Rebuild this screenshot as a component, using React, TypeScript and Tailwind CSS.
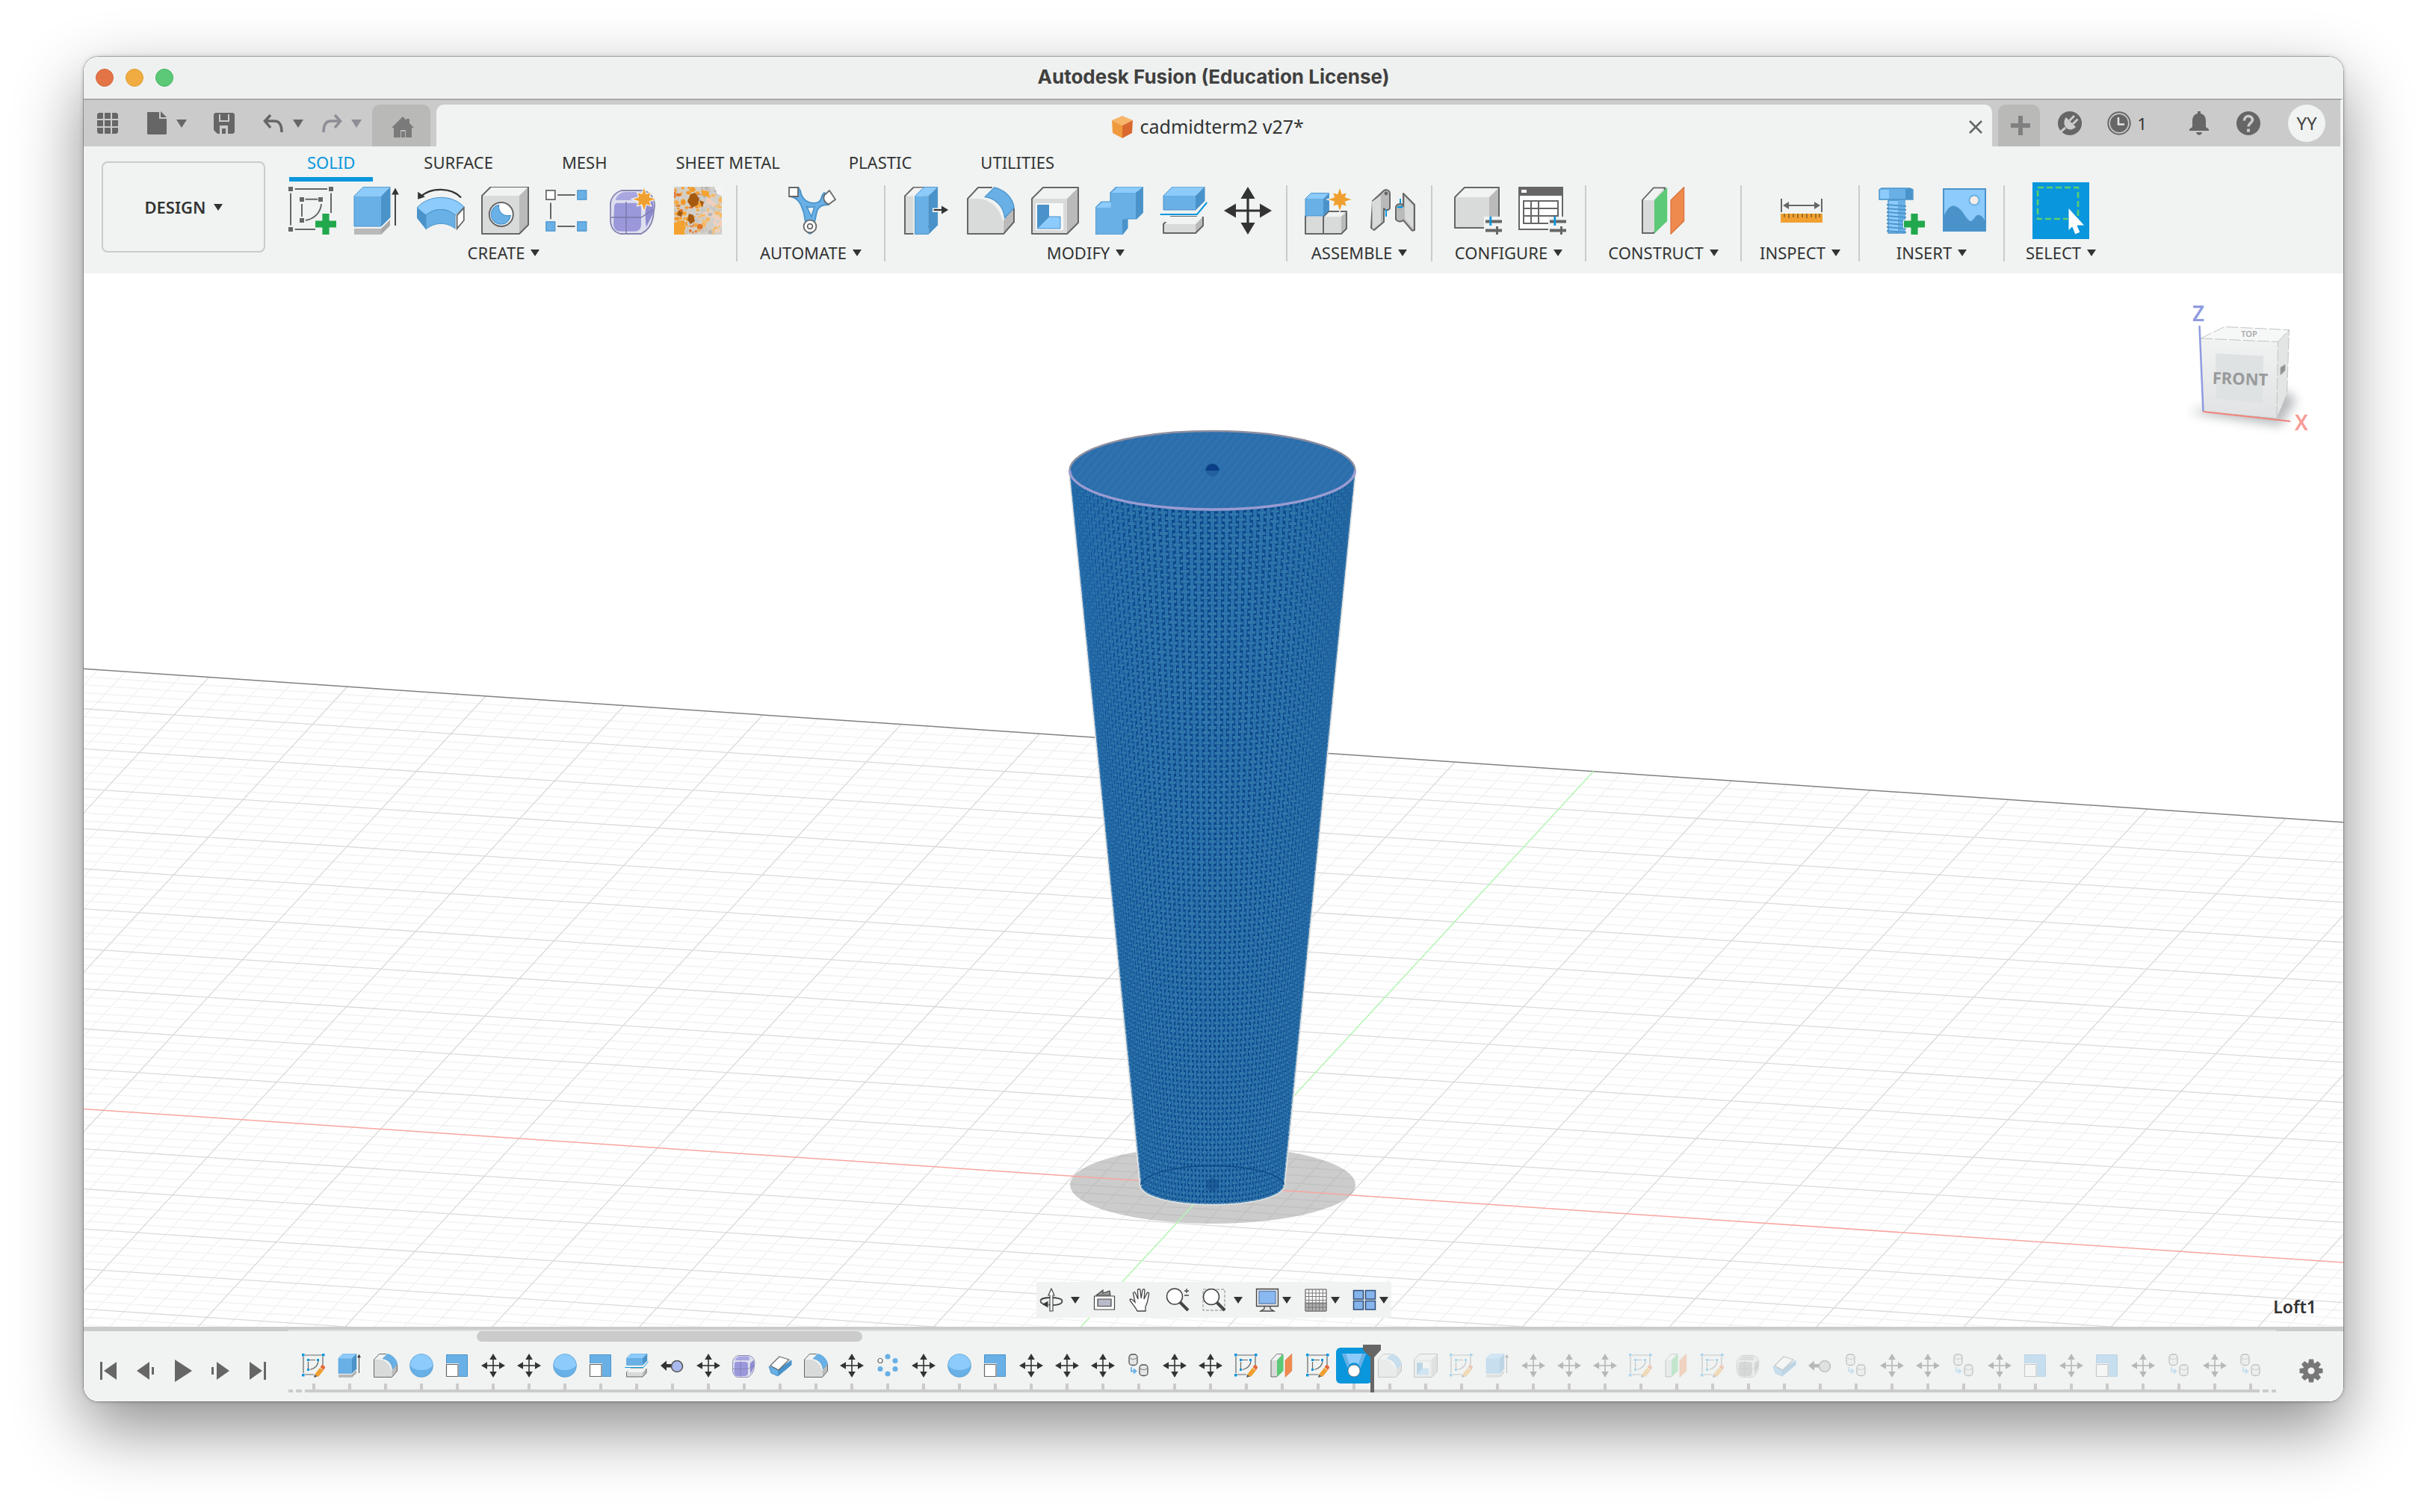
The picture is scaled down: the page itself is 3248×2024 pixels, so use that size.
import type { ReactNode } from "react";

const LIGHT = "#8ccbfb";
const MID = "#68b0e6";
const DARK = "#4a93ca";
const GREY_TOP = "#f1f2f2";
const GREY = "#d9dada";
const GREY_SIDE = "#bababa";
const LINE = "#666666";

/* ---------- icon building blocks, all on a 32 x 32 canvas ---------- */

function Icon({ size = 64, children }: { size?: number; children: ReactNode }) {
  return (
    <svg width={size} height={size} viewBox="0 0 32 32" className="shrink-0" aria-hidden="true">
      {children}
    </svg>
  );
}

type BlockProps = { x: number; y: number; w: number; h: number; d?: number; blue?: boolean };

// simple extruded box: front face w x h, depth d going up and right
function Block({ x, y, w, h, d = 6, blue = false }: BlockProps) {
  const stroke = blue ? DARK : LINE;
  return (
    <g strokeLinejoin="round">
      <path d={`M${x} ${y}l${d} ${-d}h${w}l${-d} ${d}z`} fill={blue ? LIGHT : GREY_TOP} />
      <path d={`M${x} ${y}h${w}v${h}h${-w}z`} fill={blue ? MID : GREY} />
      <path d={`M${x + w} ${y}l${d} ${-d}v${h}l${-d} ${d}z`} fill={blue ? DARK : GREY_SIDE} />
      <path
        d={`M${x} ${y}l${d} ${-d}h${w}v${h}l${-d} ${d}h${-w}z`}
        fill="none"
        stroke={stroke}
        strokeWidth={blue ? 0.5 : 1}
      />
    </g>
  );
}

function Star({ cx, cy, r }: { cx: number; cy: number; r: number }) {
  const pts = Array.from({ length: 16 }, (_, i) => {
    const rad = i % 2 ? r * 0.48 : i % 4 ? r * 0.8 : r;
    const a = (Math.PI * i) / 8;
    return `${cx + rad * Math.sin(a)},${cy - rad * Math.cos(a)}`;
  }).join(" ");
  return <polygon points={pts} fill="#f0a030" stroke="#f0f3f2" strokeWidth="0.6" />;
}

const sketchIcon = (
  <g>
    <path
      d="M4.3 1.5H26M1.5 4.2V25.7M4.3 28.5H18M28.5 4.2V17.5M11.3 8.4H19.6M9 11.5V20M22 11.5C21.6 17 17.5 21.5 11.5 22.5"
      stroke={LINE}
      strokeWidth="1"
      fill="none"
    />
    <path d="M0 0h3v3H0zM27 0h3v3h-3zM0 27h3v3H0zM7.5 7h3v3h-3zM20 7h3v3h-3zM7.5 21h3v3h-3z" fill={LINE} />
    <path d="M22.7 18h4.6v4.7H32v4.6h-4.7V32h-4.6v-4.7H18v-4.6h4.7z" fill="#22a84c" />
  </g>
);

const extrudeIcon = (
  <g>
    <path d="M1 28h18l6-6v4l-6 6H1z" fill="#a9a9a9" />
    <path d="M1 28h18v4H1z" fill="#b9b9b9" />
    <path d="M1 26.8h18l6-6" fill="none" stroke="#f0f3f2" strokeWidth="1.5" />
    <Block x={1} y={6.2} w={18} h={20.3} blue />
    <path d="M28.5 26V4" stroke="#333" strokeWidth="0.9" />
    <path d="M28.5 0.8l2.4 4.4h-4.8z" fill="#333" />
  </g>
);

const revolveIcon = (
  <g>
    <path d="M29.5 7.2C23 .5 10 0 2.5 6.5" fill="none" stroke="#333" strokeWidth="1.1" />
    <path d="M.6 8.4V3.4l4.8 3.4z" fill="#333" />
    <path d="M0 14C8 5 24 5 31.5 13.5L25.5 19C20 14 12 14 6 19z" fill={LIGHT} stroke={DARK} strokeWidth="0.5" />
    <path d="M6 19C12 14 20 14 25.5 19v9C20 23.5 12 23.5 6 28.5z" fill={MID} stroke={DARK} strokeWidth="0.5" />
    <path d="M0 14l6 5v9.5L0 21z" fill={DARK} />
    <path d="M26.8 19.2l4.6-5v8.3l-4.6 5.5z" fill="#fff" stroke={LINE} strokeWidth="0.9" />
  </g>
);

const holeIcon = (
  <g>
    <Block x={0.5} y={6} w={25} h={25.5} />
    <circle cx="13.4" cy="18.5" r="8" fill="#fff" stroke={LINE} strokeWidth="1" />
    <path d="M11.8 12.2A6.5 6.5 0 1 0 19.6 19.2C14.6 20 11.2 17 11.8 12.2z" fill={MID} stroke={DARK} strokeWidth="0.6" />
  </g>
);

const patternIcon = (
  <g>
    <path d="M8 5.5H19.8M3.5 10.8V21.6M8 26.5H19.8" stroke={LINE} strokeWidth="1" />
    <path d="M.4 2.4h6v6.2h-6z" fill="#fff" stroke={LINE} strokeWidth="0.9" />
    <path d="M21.4 2.4h6v6.2h-6zM.4 23.4h6v6.2h-6zM21.4 23.4h6v6.2h-6z" fill={MID} stroke={DARK} strokeWidth="0.6" />
  </g>
);

const formBody = (
  <g>
    <path
      d="M.5 11C1 7 4 3.5 8 2.5h14c5 1 8 5 8 10l-1 8c-1 5-4 9-8 11H7c-4-1-6-4-6.5-8z"
      fill="#dedfee"
      stroke="#8583b0"
      strokeWidth="0.9"
    />
    <path d="M3 13.5c0-2 1-2.6 3-2.6h10c4 0 5 1 5 4v10c0 4-2 5-5 5H7c-3 0-4.5-2-4.5-5z" fill="#9a98da" />
    <path d="M4 8c1.5-3 4-4.5 7-4.5h9c3 .5 4 3 2 5.5H4z" fill="#a9a7e0" />
    <path d="M24 13l4-4c1.5 1 1.6 6 1 9l-4.5 9c-.8-4-.8-10-.5-14z" fill="#8f8dd0" />
    <path d="M1 20.5h20l8-5M11 10v21" stroke="#7a78ab" strokeWidth="0.7" fill="none" />
  </g>
);

const formIcon = (
  <g>
    {formBody}
    <Star cx={23} cy={8.3} r={8.4} />
  </g>
);

// pseudo random cells of the porous lattice thumbnail
const CELLS = Array.from({ length: 150 }, (_, i) => {
  const rnd = (k: number) => {
    const v = Math.sin(i * 12.9898 + k * 78.233) * 43758.5453;
    return v - Math.floor(v);
  };
  const colors = ["#f5a330", "#f0992b", "#e0762a", "#c9c5c0", "#f3cdb9", "#b9b6b2", "#f6b760"];
  const x = rnd(1) * 32;
  const pale = x > 18 ? 3 : 0;
  return { x, y: rnd(2) * 32, rx: 0.8 + rnd(3) * 1.5, ry: 0.8 + rnd(4) * 1.6, fill: colors[Math.floor(rnd(5) * 4) + pale] };
});

const latticeIcon = (
  <g>
    <rect width="32" height="32" fill="#d2cfca" />
    {CELLS.map((c, i) => (
      <ellipse key={i} cx={c.x} cy={c.y} rx={c.rx} ry={c.ry} fill={c.fill} stroke="#dedbd5" strokeWidth="0.3" />
    ))}
    <path d="M11 5l3-1 3 4-1 4-4 2-3-4zM10 18l3 1 1 4-3 2-2-3zM17 9l3 1-1 4zM3 16l3 1-1 3-3-1z" fill="#a55a10" />
    <path d="M0 24l5-1 3 4-2 5H0zM18 2l5 1 1 4-5-1z" fill="#f5a330" />
    <path d="M27 0h5v6l-3-1z" fill="#f4f4f4" />
  </g>
);

const automateIcon = (
  <g>
    <path
      d="M1 6.5C7 7 9 13 10.5 18L11.5 24C11 26 11 30 14.5 31.5C18 30 18 26 17.5 24L19 17C20 12 25 12 27 12L29 8 24 4C21 7 23 9.5 19.5 10.5C14 12 9 9 8 2.5L6.5 0z"
      fill={MID}
      stroke={DARK}
      strokeWidth="0.9"
    />
    <path d="M12.3 13.2c2 .8 3.5.8 5.2 0L15.4 20z" fill="#f0f3f2" stroke={DARK} strokeWidth="0.8" />
    <path d="M.5.5h6v6h-6z" fill="#fff" stroke={LINE} strokeWidth="0.9" />
    <path d="M27.5 2.5l4 6-4.5 3.2c-3-1-4-4-2.8-6.2z" fill="#fff" stroke={LINE} strokeWidth="0.9" />
    <circle cx="14.5" cy="26.5" r="4.2" fill="#fff" stroke={LINE} strokeWidth="0.9" />
    <circle cx="14.5" cy="26.5" r="1.7" fill="#fff" stroke={LINE} strokeWidth="0.9" />
  </g>
);

const pressPullIcon = (
  <g>
    <Block x={1.5} y={6.2} w={11} h={25.3} />
    <path d="M7.2 6.2L13 .2V32H7.2z" fill="#f0f3f2" />
    <Block x={8.3} y={6.2} w={9} h={25.5} blue />
    <path d="M20 14.2h6v-3.4l5.5 4.8-5.5 4.8v-3.4h-6z" fill="#f0f3f2" />
    <path d="M20.8 15.5h6" stroke="#333" strokeWidth="1.1" />
    <path d="M26 12.8l4.6 2.7-4.6 2.7z" fill="#333" />
  </g>
);

const filletIcon = (
  <g strokeLinejoin="round">
    <path d="M.5 8L7.5.5H17L11 7.5z" fill={GREY_TOP} />
    <path d="M.5 8H7C17 8 24 17 24.3 26v5.5H.5z" fill={GREY} />
    <path d="M24.5 22.5L31.5 14.5V23.5L24.5 31.5z" fill={GREY_SIDE} />
    <path d="M17 .5H7.5L.5 8v23.5h24l7-8V14.5" fill="none" stroke={LINE} strokeWidth="1" />
    <path d="M12 6.8L18.5.4C26 2 31 8.5 31.6 14L25.3 21C24.5 13 19 7.5 12 6.8z" fill={MID} stroke={DARK} strokeWidth="0.6" />
  </g>
);

const shellIcon = (
  <g>
    <Block x={0.5} y={8} w={23.5} h={23.5} d={7.5} />
    <path d="M3 11h18.5v18H3z" fill="#f6f7f7" />
    <path d="M4 12h8v8l-8 8z" fill={DARK} />
    <path d="M12 20h7.5v8H4z" fill={LIGHT} stroke={DARK} strokeWidth="0.5" />
  </g>
);

const combineIcon = (
  <g>
    <path d="M0 14l4-4h6V4l4-4h18v17l-4.5 4.5H21.5v6L18 32H0z" fill={MID} stroke={DARK} strokeWidth="0.6" />
    <path d="M10.5 4L14.5.4H31.6L27 4z" fill={LIGHT} />
    <path d="M.4 14l4-3.6h6V14z" fill={LIGHT} />
    <path d="M27 4L31.7.4V17L27 21.5zM18 21.7h3.5v6L18 31.8z" fill={DARK} />
  </g>
);

const splitIcon = (
  <g>
    <Block x={2.5} y={25} w={21.5} h={6} d={5} />
    <path d="M0 20h32v-8l-7 9H0z" fill="#f0f3f2" />
    <path d="M2.5 20.3h22L30 14v5l-6 4.5H2.5z" fill="#f0f3f2" />
    <Block x={2.5} y={6} w={21.5} h={9.5} blue />
    <path d="M.3 18.5H25L31.6 10.5" fill="none" stroke="#0a96dc" strokeWidth="1" />
  </g>
);

const moveIcon = (
  <g fill="#333">
    <path d="M15.2 5h1.6v22h-1.6z" />
    <path d="M5 15.2h22v1.6H5z" />
    <path d="M16 0l4.8 8h-9.6zM16 32l4.8-8h-9.6zM0 16l8-4.8v9.6zM32 16l-8-4.8v9.6z" />
  </g>
);

const componentIcon = (
  <g>
    <Block x={0.5} y={20} w={12} h={11.5} d={3.5} />
    <Block x={12.5} y={20} w={12} h={11.5} d={3.5} />
    <Block x={0.5} y={8} w={12} h={11.5} d={3.7} blue />
    <Star cx={23.5} cy={8.5} r={8.5} />
  </g>
);

const jointIcon = (
  <g strokeLinejoin="round">
    <path d="M2.5 9.5L9 3.5c2-2.5 5-1.5 5 1.5v9.5c-1 1.5-3 1.5-4 0v9L3.5 29l-2-1.5z" fill={GREY_SIDE} stroke={LINE} />
    <path d="M2 10l6-4v18l-5.5 4.5z" fill={GREY} />
    <circle cx="11.5" cy="4.5" r="1.2" fill={LINE} />
    <path d="M11.5 15v5M21 8v5" stroke="#0a96dc" strokeWidth="1" />
    <path d="M23 4.5L30.5 12v17l-1.5.4-6-7c-1.5 1.5-4 1-5-.5V14c0-2.5 4-3.5 5-1z" fill={GREY_SIDE} stroke={LINE} />
    <path d="M24 6.5l5.5 6V28L24 21.5z" fill={GREY} />
    <path d="M18.5 13.5c1.5-1 3.5-1 4.5 0-1 1-3.5 1-4.5 0z" fill="#0a96dc" />
  </g>
);

const sliders = (
  <g>
    <path d="M20 20h12v12H20z" fill="#f0f3f2" />
    <path d="M21 22.2h11v2H21zM21 28.2h11v2H21z" fill={LINE} />
    <path d="M23.7 20h1.4v6h-1.4z" fill="#0a96dc" />
    <path d="M28 26.5h1.5V32H28z" fill={LINE} />
  </g>
);

const configureIcon = (
  <g>
    <Block x={0.5} y={7} w={23} h={20.5} d={6.5} />
    {sliders}
  </g>
);

const tableIcon = (
  <g>
    <path d="M.5.5h29v28H.5z" fill="#fff" stroke={LINE} />
    <path d="M0 0h30v6H0z" fill={LINE} />
    <path d="M2 2h3.5v2H2z" fill="#fff" />
    <path d="M3.5 9.5h23v15h-23zM3.5 14.5h23M3.5 19.5h23M8.5 9.5v15M13.5 9.5v15" fill="none" stroke={LINE} />
    {sliders}
  </g>
);

const planesIcon = (
  <g>
    <path d="M1 9L8.5 .8H16V23L8.5 31H1z" fill={GREY} stroke={LINE} />
    <path d="M1.5 9L8.7 1.2H15L8.5 9z" fill={GREY_TOP} />
    <path d="M9 9L17.6.3V23L9 31.3z" fill="#5bc976" />
    <path d="M20 9L28.8.3V23L20 31.6z" fill="#ee8a4e" stroke="#d9703a" strokeWidth="0.6" />
  </g>
);

const rulerIcon = (
  <g>
    <path d="M2.5 8v9M29.5 8v9M5 12.5h22" stroke={LINE} />
    <path d="M3.5 12.5l4-2.5v5zM28.5 12.5l-4-2.5v5z" fill={LINE} />
    <path d="M2 18h28v6H2z" fill="#f0a030" />
    <path
      d="M4.5 18v2.5M7.5 18v3M10.5 18v2.5M13.5 18v3M16.5 18v2.5M19.5 18v3M22.5 18v2.5M25.5 18v3M28 18v2.5"
      stroke="#7d5a20"
      strokeWidth="0.7"
    />
  </g>
);

const boltIcon = (
  <g>
    <path d="M1.5 2L3 1h19l2 1v6.5H1.5z" fill={MID} stroke={DARK} strokeWidth="0.7" />
    <path d="M2 2h6v6H2z" fill={LIGHT} />
    <path d="M19 1.5h4.5v7H19z" fill={DARK} />
    <path d="M7.5 9h11v22h-11z" fill={LIGHT} stroke={DARK} strokeWidth="0.7" />
    <path d="M14 9h4.5v22H14z" fill={MID} />
    <path
      d="M6.5 12l13 1M6.5 14.5l13 1M6.5 17l13 1M6.5 19.5l13 1M6.5 22l13 1M6.5 24.5l13 1M6.5 27l13 1M6.5 29.5l13 1"
      stroke={DARK}
      strokeWidth="0.9"
    />
    <path
      d="M22.7 18h4.6v4.7H32v4.6h-4.7V32h-4.6v-4.7H18v-4.6h4.7z"
      fill="#22a84c"
      stroke="#f0f3f2"
      strokeWidth="1"
      paintOrder="stroke"
    />
  </g>
);

const pictureIcon = (
  <g>
    <path d="M1.5 1.5h28v28h-28z" fill={LIGHT} stroke={DARK} />
    <path d="M1.5 20C5 12 8 12 10.5 13.5C15 16 17 23 20 23C22 22 23 18 25.5 19C28 20 29 22 29.5 24v5.5h-28z" fill={DARK} />
    <circle cx="22" cy="9" r="3.3" fill="#f7ece6" stroke={MID} />
  </g>
);

/* ---------- timeline-only icons ---------- */

const sketchEditIcon = (
  <g>
    <path
      d="M4 2H28M2 4V26M4 28H16M28 4V16M10 8.5h8M8.5 11v9M22 9.5C22 15 18 20 11 21.5"
      stroke={LINE}
      strokeWidth="1.2"
      fill="none"
    />
    <path d="M0 0h3.5v3.5H0zM27 0h3.5v3.5H27zM0 27h3.5v3.5H0zM7 7h3v3H7zM20 7h3v3h-3zM7 20h3v3H7z" fill="#0a96dc" />
    <path d="M17 28L24 19l5 3.5L22 31z" fill="#f0a030" />
    <path d="M24.5 18l2-2.5c1.5-1 5 1.5 4.5 3.5l-2 3z" fill="#e6693a" />
    <path d="M17 28l-1 4 5-1.5z" fill="#555" />
  </g>
);

const sphereIcon = (
  <g>
    <circle cx="16" cy="16" r="15.5" fill={MID} stroke={DARK} strokeWidth="0.6" />
    <path d="M1 16a15 15 0 0 1 30 0c-6 8-24 8-30 0z" fill={LIGHT} />
  </g>
);

const scaleIcon = (
  <g>
    <path d="M1.5 1.5h28v29h-28z" fill={MID} stroke={DARK} />
    <path d="M0 13h18v19H0z" fill="#f0f3f2" />
    <path d="M1.5 14.5h15.5v16H1.5z" fill="#fff" stroke={LINE} strokeWidth="1.2" />
  </g>
);

const captureIcon = (
  <g>
    <path d="M0 16l8-6.5v4.5h6v4.5H8V23z" fill="#333" />
    <circle cx="22" cy="17" r="7.5" fill="#a9b8ee" stroke="#555" strokeWidth="1.6" />
  </g>
);

const thickenIcon = (
  <g strokeLinejoin="round">
    <path d="M1 17l3 9 9 4L31 15V9L14 22z" fill={MID} stroke={DARK} />
    <path d="M13 21L31 9v6L13 30z" fill={DARK} />
    <path d="M3 16L15 4l13 4L14 22z" fill="#fff" stroke={LINE} strokeWidth="1.2" />
  </g>
);

const circularIcon = (
  <g fill={MID}>
    <circle cx="16" cy="4" r="3.5" />
    <circle cx="26" cy="9.5" r="3.5" />
    <circle cx="26" cy="20.5" r="3.5" />
    <circle cx="16" cy="27" r="3.5" />
    <circle cx="6" cy="20.5" r="3.5" />
    <circle cx="6" cy="9.5" r="3" fill="#fff" stroke={LINE} strokeWidth="1.2" />
  </g>
);

const copyIcon = (
  <g stroke="#555" strokeWidth="1.3" fill="#e4e5e5">
    <rect x="3" y="1" width="11" height="14.5" rx="4" />
    <rect x="17" y="15" width="11" height="14.5" rx="4" />
    <path d="M4 6c3 2 6 2 9 0M18 20c3 2 6 2 9 0" fill="none" strokeWidth="0.8" />
    <path d="M6 18v5.5h5M9 20.5l3.5 3-3.5 3" fill="none" stroke={MID} strokeWidth="1.8" />
  </g>
);

const loftIcon = (
  <g>
    <path d="M0 0h32L24.5 19C23 10 9 10 7.5 19z" fill={LIGHT} />
    <path d="M0 0h5l5 14-2.5 5zM32 0h-5l-5 14 2.5 5z" fill={MID} />
    <circle cx="16" cy="23" r="8" fill="#fff" stroke={LINE} strokeWidth="0.8" />
  </g>
);

const TIMELINE_ICONS: Record<string, ReactNode> = {
  Sketch: sketchEditIcon,
  Extrude: extrudeIcon,
  Fillet: filletIcon,
  Sphere: sphereIcon,
  Scale: scaleIcon,
  Move: moveIcon,
  Split: splitIcon,
  Capture: captureIcon,
  Form: formBody,
  Thicken: thickenIcon,
  Circular: circularIcon,
  Copy: copyIcon,
  Plane: planesIcon,
  Loft: loftIcon,
  Shell: shellIcon,
};

const TIMELINE = (
  "Sketch Extrude Fillet Sphere Scale Move Move Sphere Scale Split Capture Move Form Thicken Fillet Move Circular Move " +
  "Sphere Scale Move Move Move Copy Move Move Sketch Plane Sketch Loft Fillet Shell Sketch Extrude Move Move Move " +
  "Sketch Plane Sketch Form Thicken Capture Copy Move Move Copy Move Scale Move Scale Move Copy Move Copy"
).split(" ");
const CURRENT = 29;

function timelineButtonClass(name: string, i: number) {
  if (i === CURRENT) return "flex size-12 items-center justify-center rounded-md bg-[#0a96dc]";
  if (i < CURRENT) return "flex size-12 items-center justify-center";
  // rolled back features are dimmed, some of them lose their colour too
  return name === "Form" || name === "Capture"
    ? "flex size-12 items-center justify-center opacity-30 grayscale"
    : "flex size-12 items-center justify-center opacity-30";
}

/* ---------- title bar and document tabs ---------- */

function Caret({ className = "text-[#333]" }: { className?: string }) {
  return (
    <svg width="12" height="9" viewBox="0 0 12 9" className={className} aria-hidden="true">
      <path d="M0 0h12L6 9z" fill="currentColor" />
    </svg>
  );
}

function WideCaret() {
  return (
    <svg width="14" height="11" viewBox="0 0 14 11" fill="currentColor" aria-hidden="true">
      <path d="M0 0h14L7 11z" />
    </svg>
  );
}

function TitleBar() {
  return (
    <header className="grid h-14 shrink-0 grid-cols-[1fr_auto_1fr] items-center bg-[#eff1f0]">
      <div className="flex gap-4 pl-4">
        <button aria-label="Close" className="size-6 rounded-full border border-[#d5673d] bg-[#e27446]" />
        <button aria-label="Minimise" className="size-6 rounded-full border border-[#e19d35] bg-[#f0ab41]" />
        <button aria-label="Zoom" className="size-6 rounded-full border border-[#43b561] bg-[#5bc976]" />
      </div>
      <h1 className="pb-0.5 font-['Inter',sans-serif] text-[26px] leading-8 font-bold text-[#404040]">
        Autodesk Fusion (Education License)
      </h1>
    </header>
  );
}

function TabStrip() {
  return (
    <div className="flex h-16 shrink-0 items-center border-t-2 border-r-4 border-t-[#a8a8a8] border-r-[#f0f3f2] bg-[#cbcbcb] text-[#666]">
      <button aria-label="Data panel" className="ml-[18px]">
        <svg width="28" height="28" viewBox="0 0 28 28" fill="currentColor">
          <path d="M2 0h6v8H0V2zM10 0h8v8h-8zM20 0h6l2 2v6h-8zM0 10h8v8H0zM10 10h8v8h-8zM20 10h8v8h-8zM0 20h8v8H2l-2-2zM10 20h8v8h-8zM20 20h8v6l-2 2h-6z" />
        </svg>
      </button>
      <button aria-label="File" className="ml-[38px] flex items-center gap-3">
        <svg width="28" height="32" viewBox="0 0 28 32" fill="currentColor">
          <path d="M1 1h16v9h10v20l-1 1H2l-1-1zM19 0l8 8h-8z" />
        </svg>
        <WideCaret />
      </button>
      <button aria-label="Save" className="ml-9">
        <svg width="28" height="28" viewBox="0 0 28 28" fill="currentColor" fillRule="evenodd">
          <path d="M2 0h24l2 2v24l-2 2H5l-5-5V2zM7 2v10h14V2h-2v8H9V2zM8 17v11h3v-7h5v7h3V17z" />
        </svg>
      </button>
      <button aria-label="Undo" className="ml-[38px] flex items-center gap-3">
        <svg width="28" height="26" viewBox="0 0 28 26" fill="none" stroke="currentColor" strokeWidth="3.5">
          <path d="M10 2L2.5 10l7.5 9M3 10h12c6 0 10 4 10 15" />
        </svg>
        <WideCaret />
      </button>
      <button aria-label="Redo" className="ml-6 flex items-center gap-3 text-[#8d8d96]">
        <svg width="28" height="26" viewBox="0 0 28 26" fill="none" stroke="currentColor" strokeWidth="3.5">
          <path d="M18 2l7.5 8-7.5 9M25 10H13C7 10 3 14 3 25" />
        </svg>
        <WideCaret />
      </button>
      <button aria-label="Home" className="ml-3.5 flex h-14 w-[78px] items-center justify-center self-end rounded-t-[10px] bg-[#b9b9b7] pt-1 pl-1 text-[#7a7a7a]">
        <svg width="32" height="28" viewBox="0 0 32 28" fill="currentColor" fillRule="evenodd">
          <path d="M16 0l5 5V3h4v6l6 6h-3v13h-8V18h-7v10H4V15H1zM14 20h5v8h-5z" />
        </svg>
      </button>
      <div className="ml-2 flex h-14 flex-1 items-center self-end rounded-t-[10px] bg-[#f0f3f2] pt-1 pr-3">
        <div className="flex flex-1 items-center justify-center gap-2 pl-3 font-['Noto_Sans',sans-serif] text-[25px] text-[#333]">
          <svg width="32" height="32" viewBox="0 0 32 32" aria-hidden="true">
            <path d="M16 1l14 6-14 7L2 7z" fill="#f7b56a" />
            <path d="M2 7l14 7v17L3 24z" fill="#f09a3e" />
            <path d="M30 7l-14 7v17l13-7z" fill="#d9692f" />
          </svg>
          cadmidterm2 v27*
        </div>
        <button aria-label="Close tab">
          <svg width="20" height="20" viewBox="0 0 20 20" stroke="currentColor" strokeWidth="2.5">
            <path d="M2 2l16 16M18 2L2 18" />
          </svg>
        </button>
      </div>
      <button aria-label="New tab" className="ml-2 flex h-14 w-14 items-center justify-center self-end rounded-t-[10px] bg-[#b9b9b7] pl-1 text-[#808080]">
        <svg width="26" height="26" viewBox="0 0 26 26" fill="currentColor">
          <path d="M10 0h6v10h10v6H16v10h-6V16H0v-6h10z" />
        </svg>
      </button>
      <button aria-label="Extensions" className="ml-6">
        <svg width="32" height="32" viewBox="0 0 32 32">
          <circle cx="16" cy="16" r="16" fill="#666" />
          <path d="M11 8l13 13c-4 4-9 4.500-12.500 1.500S7 12 11 8z" fill="#cbcbcb" />
          <path d="M15.500 12.500L22 6M20 17l6.500-6.500M10 22l-7 6" stroke="#cbcbcb" strokeWidth="3" />
        </svg>
      </button>
      <button aria-label="Job status" className="ml-[34px] flex items-center gap-2 font-['Noto_Sans',sans-serif] text-[22px] text-[#333]">
        <svg width="32" height="32" viewBox="0 0 32 32">
          <circle cx="16" cy="16" r="14.7" fill="#cbcbcb" stroke="#666" strokeWidth="2" />
          <circle cx="16" cy="16" r="12" fill="#666" />
          <path d="M15 8v9.5h8" fill="none" stroke="#e4e4e4" strokeWidth="2.5" />
        </svg>
        1
      </button>
      <button aria-label="Notifications" className="ml-[54px]">
        <svg width="32" height="32" viewBox="0 0 32 32" fill="currentColor">
          <path d="M14 0h4v3c5 1 7 5 7 10v8l4 3v2H3v-2l4-3v-8c0-5 2-9 7-10zM12 28h8c-1 5-7 5-8 0z" />
        </svg>
      </button>
      <button aria-label="Help" className="ml-[34px]">
        <svg width="32" height="32" viewBox="0 0 32 32">
          <circle cx="16" cy="16" r="16" fill="#666" />
          <path d="M10.5 12.5c0-8 11-7.5 11-1 0 4-5.5 4.5-5.5 9" fill="none" stroke="#cbcbcb" strokeWidth="3.6" />
          <path d="M14 23.5h4v4h-4z" fill="#cbcbcb" />
        </svg>
      </button>
      <button className="mr-5 ml-[37px] size-[50px] rounded-full bg-[#f0f3f2] font-['Noto_Sans',sans-serif] text-2xl text-[#444]">
        YY
      </button>
    </div>
  );
}

/* ---------- ribbon ---------- */

const MODES = ["SOLID", "SURFACE", "MESH", "SHEET METAL", "PLASTIC", "UTILITIES"];

type Tool = { name: string; icon: ReactNode };
type Group = { label: string; width: string; tools: Tool[] };

const GROUPS: Group[] = [
  {
    label: "CREATE",
    width: "w-[618px] pr-1",
    tools: [
      { name: "Create sketch", icon: sketchIcon },
      { name: "Extrude", icon: extrudeIcon },
      { name: "Revolve", icon: revolveIcon },
      { name: "Hole", icon: holeIcon },
      { name: "Rectangular pattern", icon: patternIcon },
      { name: "Create form", icon: formIcon },
      { name: "Volumetric lattice", icon: latticeIcon },
    ],
  },
  { label: "AUTOMATE", width: "w-[196px]", tools: [{ name: "Automated modeling", icon: automateIcon }] },
  {
    label: "MODIFY",
    width: "w-[536px]",
    tools: [
      { name: "Press pull", icon: pressPullIcon },
      { name: "Fillet", icon: filletIcon },
      { name: "Shell", icon: shellIcon },
      { name: "Combine", icon: combineIcon },
      { name: "Split body", icon: splitIcon },
      { name: "Move", icon: moveIcon },
    ],
  },
  {
    label: "ASSEMBLE",
    width: "w-[192px]",
    tools: [
      { name: "New component", icon: componentIcon },
      { name: "Joint", icon: jointIcon },
    ],
  },
  {
    label: "CONFIGURE",
    width: "w-[204px]",
    tools: [
      { name: "Configure model", icon: configureIcon },
      { name: "Configuration table", icon: tableIcon },
    ],
  },
  { label: "CONSTRUCT", width: "w-[206px]", tools: [{ name: "Offset plane", icon: planesIcon }] },
  { label: "INSPECT", width: "w-[156px]", tools: [{ name: "Measure", icon: rulerIcon }] },
  {
    label: "INSERT",
    width: "w-[192px]",
    tools: [
      { name: "Insert fastener", icon: boltIcon },
      { name: "Canvas", icon: pictureIcon },
    ],
  },
];

function GroupLabel({ children }: { children: string }) {
  return (
    <button className="flex h-8 items-center justify-center gap-2 pt-1 leading-6">
      {children}
      <Caret />
    </button>
  );
}

function Ribbon() {
  return (
    <section className="flex h-[170px] shrink-0 gap-3 bg-[#f0f3f2] pl-6 font-['Noto_Sans',sans-serif] text-[22px] text-[#333]">
      <button className="mt-5 flex h-[122px] w-[219px] items-center justify-center gap-2.5 rounded-lg border-2 border-[#cbcbcb] font-semibold">
        DESIGN
        <Caret />
      </button>
      <div className="flex flex-col">
        <nav className="flex gap-11 pl-5">
          {MODES.map((mode) => (
            <button
              key={mode}
              className={
                mode === "SOLID"
                  ? "h-[47px] border-b-6 border-[#0a96dc] px-6 pt-0.5 text-[#0a96dc]"
                  : "h-[47px] border-b-6 border-transparent px-6 pt-0.5"
              }
            >
              {mode}
            </button>
          ))}
        </nav>
        <div className="flex pt-px">
          {GROUPS.map((group) => (
            <div key={group.label} className="flex">
              <div className={`flex flex-col ${group.width}`}>
                <div className="flex h-[76px] items-center justify-center gap-[22px] pl-1">
                  {group.tools.map((tool) => (
                    <button key={tool.name} aria-label={tool.name}>
                      <Icon>{tool.icon}</Icon>
                    </button>
                  ))}
                </div>
                <GroupLabel>{group.label}</GroupLabel>
              </div>
              <span className="mt-1 h-[102px] w-0.5 bg-[#cbcbcb]" />
            </div>
          ))}
          <div className="flex w-[150px] flex-col items-center">
            <button aria-label="Select" className="bg-[#0a96dc]">
              <svg width="76" height="76" viewBox="0 0 76 76">
                <path d="M7 7h54v42H7z" fill="none" stroke="#5bd06e" strokeWidth="2.5" strokeDasharray="8 4" />
                <path d="M48 34l22 24h-10l4 9-7 3-4-10-5 5z" fill="#fff" stroke="#0a96dc" strokeWidth="1" />
              </svg>
            </button>
            <GroupLabel>SELECT</GroupLabel>
          </div>
        </div>
      </div>
    </section>
  );
}

/* ---------- 3D canvas ---------- */

const ORIGIN = { x: 1509, y: 1221 };
const U = { x: 185.3, y: 12.6 };
const V = { x: 46.5, y: -50.4 };

const at = (u: number, v: number) =>
  `${(ORIGIN.x + U.x * u + V.x * v).toFixed(1)} ${(ORIGIN.y + U.y * u + V.y * v).toFixed(1)}`;

function gridPath(major: boolean) {
  let d = "";
  for (let i = -75; i <= 70; i++) {
    if ((i % 5 === 0) !== major || i === 0) continue;
    d += `M${at(i / 5, 11)}L${at(i / 5, -12)}`;
  }
  for (let j = -60; j < 55; j++) {
    if ((j % 5 === 0) !== major || j === 0) continue;
    d += `M${at(-15, j / 5)}L${at(15, j / 5)}`;
  }
  return d;
}

const GRID_MINOR = gridPath(false);
const GRID_MAJOR = gridPath(true);

// woven texture wrapped round the tapered body
const CONE = { cx: 1510.5, top: 264, bottom: 1220, r0: 191, r1: 96 };

function weave() {
  let across = "";
  let down = "";
  const step = 0.0508;
  for (let row = 0; row < 142; row++) {
    const t = row / 134;
    for (let col = -30; col <= 30; col++) {
      const a = col * step;
      const r = CONE.r0 + (CONE.r1 - CONE.r0) * Math.min(t, 1);
      const x = CONE.cx + r * Math.sin(a);
      const y = CONE.top + (CONE.bottom - CONE.top) * t + r * 0.275 * Math.cos(a);
      const w = r * step * Math.cos(a);
      if ((row + col) % 2 === 0) {
        across += `M${(x - w * 0.62).toFixed(1)} ${(y - 1.9).toFixed(1)}h${(w * 1.24).toFixed(1)}v3.8h${(-w * 1.24).toFixed(1)}z`;
      } else {
        down += `M${(x - w * 0.27).toFixed(1)} ${(y - 5).toFixed(1)}h${(w * 0.54).toFixed(1)}v10h${(-w * 0.54).toFixed(1)}z`;
      }
    }
  }
  return { across, down };
}

const WEAVE = weave();
const BODY = "M1319.5 268L1414.5 1222C1419 1236 1458 1246 1510.5 1246C1563 1246 1602 1236 1606.5 1222L1701.5 268z";

function Scene() {
  return (
    <svg
      viewBox="0 0 3024 1410"
      preserveAspectRatio="xMidYMid slice"
      className="h-full w-full"
      role="img"
      aria-label="Tapered woven body on the ground grid"
    >
      <defs>
        <clipPath id="body">
          <path d={BODY} />
        </clipPath>
        <linearGradient id="shade">
          <stop offset="0" stopColor="#1f68ac" stopOpacity="0.5" />
          <stop offset="0.25" stopColor="#1f68a8" stopOpacity="0.1" />
          <stop offset="0.5" stopColor="#1f68a8" stopOpacity="0" />
          <stop offset="0.75" stopColor="#1f68a0" stopOpacity="0.1" />
          <stop offset="1" stopColor="#1d609c" stopOpacity="0.5" />
        </linearGradient>
        <pattern id="brushed" width="8" height="8" patternUnits="userSpaceOnUse" patternTransform="rotate(40)">
          <rect width="8" height="8" fill="#2b6eac" />
          <rect width="3" height="8" fill="#3172af" />
        </pattern>
      </defs>
      <path d={GRID_MINOR} stroke="#f1f1f1" strokeWidth="1.3" />
      <path d={GRID_MAJOR} stroke="#dadada" strokeWidth="1.3" />
      <path d={`M${at(-15, 11)}L${at(15, 11)}`} stroke="#808080" strokeWidth="1.5" />
      <ellipse cx="1511" cy="1220" rx="191" ry="52" fill="#000" opacity="0.2" />
      <path d={`M${at(-15, 0)}L${at(15, 0)}`} stroke="#f7a5a0" strokeWidth="1.5" />
      <path d={`M${at(0, 11)}L${at(0, -12)}`} stroke="#b4f5b4" strokeWidth="1.5" />

      <path d={BODY} fill="#0a4486" stroke="#e4e4e4" strokeWidth="3" />
      <g clipPath="url(#body)">
        <path d={WEAVE.down} fill="#2b72ae" />
        <path d={WEAVE.across} fill="#3078aa" />
        <path d={BODY} fill="url(#shade)" />
        <path d="M1414 1220C1430 1186 1591 1186 1607 1220" fill="none" stroke="#0d4886" strokeWidth="1.5" />
        <circle cx="1510.5" cy="1220" r="9" fill="#0f4786" opacity="0.5" />
      </g>
      <ellipse cx="1510.5" cy="263.5" rx="191" ry="52.5" fill="url(#brushed)" />
      <path d="M1319.5 263.5A191 52.5 0 0 1 1701.5 263.5" fill="none" stroke="#8f8fa0" strokeWidth="2.5" />
      <path d="M1319.5 263.5A191 52.5 0 0 0 1701.5 263.5" fill="none" stroke="#9a9cd2" strokeWidth="3.5" />
      <circle cx="1510.5" cy="263" r="9" fill="#23609e" />
      <path d="M1501.5 264a9 9 0 0 1 18 0z" fill="#0a3f86" />
    </svg>
  );
}

function ViewCube() {
  return (
    <svg
      width="200"
      height="200"
      viewBox="2910 395 200 200"
      className="absolute top-[29px] right-[26px] font-['Noto_Sans',sans-serif]"
      role="img"
      aria-label="View cube"
    >
      <defs>
        <linearGradient id="face" x1="0" y1="0" x2="0" y2="1">
          <stop offset="0" stopColor="#f1f3f3" />
          <stop offset="1" stopColor="#e0e2e3" />
        </linearGradient>
        <filter id="soft" x="-20%" y="-50%" width="140%" height="200%">
          <feGaussianBlur stdDeviation="7" />
        </filter>
      </defs>
      <path d="M2930 552L3052 570L3074 534L3050 520z" fill="#8a8f92" opacity="0.6" filter="url(#soft)" />
      <path d="M2945 453L2977 437.5L3063.5 441.5L3048.5 457.5z" fill="#f6f7f7" />
      <path d="M3048.5 457.5L3063.5 441.5L3060.5 528L3047 560z" fill="#e3e5e5" />
      <path d="M2945 453L3048.5 457.5L3047 560L2949 551z" fill="url(#face)" />
      <path d="M2965 473L3029 476.5L3028 540L2966 534z" fill="#dfe2e3" />
      <path
        d="M2945 453L2977 437.5L3063.5 441.5L3060.5 528L3047 560L2949 551M2945 453L3048.5 457.5L3047 560M3048.5 457.5L3063.5 441.5"
        fill="none"
        stroke="#c2c4c4"
        strokeDasharray="16 3"
      />
      <path d="M3052 492l6-4v8l-6 6zM3053 500l5-5" fill="#8f9191" stroke="#a3a5a5" />
      <text x="2998" y="515" textAnchor="middle" fontSize="22" fontWeight="700" fill="#989a9b" transform="rotate(2 2998 507)">
        FRONT
      </text>
      <text x="3010" y="451" textAnchor="middle" fontSize="11" fontWeight="600" fill="#a9abab">
        TOP
      </text>
      <path d="M2943.5 436L2948.5 551" stroke="#8f9be0" strokeWidth="2.5" />
      <path d="M2948.5 551L3065 564" stroke="#f0837a" strokeWidth="2" />
      <text x="2942" y="430" textAnchor="middle" fontSize="28" fontWeight="600" fill="#8f9be0">
        Z
      </text>
      <text x="3080" y="576" textAnchor="middle" fontSize="28" fontWeight="600" fill="#f79d98">
        X
      </text>
    </svg>
  );
}

const NAV: { name: string; icon: ReactNode; menu?: string }[] = [
  {
    name: "Orbit",
    menu: "gap-2.5",
    icon: (
      <g fill="#fff" stroke="#444" strokeWidth="1.2">
        <path d="M1.5 17.5c0-6 29-6 29 0s-13 6-18 5" fill="none" strokeWidth="1.8" />
        <path d="M16 1l4 9h-2v21h-4V10h-2z" />
        <path d="M1.5 17.5c0 3 4 4.5 9 5.5" fill="none" strokeWidth="1.8" />
        <path d="M5 22l6-3.5v7z" fill="#333" />
      </g>
    ),
  },
  {
    name: "Look at",
    icon: (
      <g stroke="#444" strokeWidth="1.2" fill="#fff">
        <path d="M5 10L14 3v4l9-3 1 6z" fill="#999" />
        <path d="M2.5 11h27v18h-27z" />
        <path d="M7 15h18v9.5H7z" fill="#b9bac9" />
      </g>
    ),
  },
  {
    name: "Pan",
    icon: (
      <path
        d="M11 31C9 26 3 20 1 16c1-2 3-1 7 3L5.5 7c1-2 2.5-1.5 3 0L12 15 11.5 3c.5-2 3-2 3.5 0l1.2 11L18 3c1-2 3-1.5 3 .5L20 15l4-8c1-1.5 3-.5 2.5 1.5C25 15 25 20 22 25v6z"
        fill="#fff"
        stroke="#444"
        strokeWidth="1.3"
      />
    ),
  },
  {
    name: "Zoom",
    icon: (
      <g stroke="#444" fill="#fff">
        <path d="M18 18l12 12" stroke="#444" strokeWidth="4" />
        <circle cx="12" cy="11.5" r="10.5" strokeWidth="1.5" />
        <path d="M25 4h6M28 1v6M25 10h6" strokeWidth="1.3" />
      </g>
    ),
  },
  {
    name: "Fit",
    menu: "gap-2.5",
    icon: (
      <g stroke="#444" fill="#fff">
        <path d="M1 2h29v28H1z" fill="none" stroke="#888" strokeDasharray="4 2" />
        <path d="M19 19l11 11" strokeWidth="4" />
        <circle cx="12" cy="12" r="10.5" strokeWidth="1.5" />
      </g>
    ),
  },
  {
    name: "Display settings",
    menu: "gap-1",
    icon: (
      <g stroke="#444" strokeWidth="1.3" fill="#e6e6e6">
        <path d="M12 24h8v4l5 3H7l5-3z" />
        <path d="M1.5 1.5h29v23h-29z" />
        <path d="M5 4.5h22v16.5H5z" fill="#8ab8f0" stroke="#6688b8" />
      </g>
    ),
  },
  {
    name: "Grid and snaps",
    menu: "gap-1",
    icon: (
      <g stroke="#777" strokeWidth="1">
        <path d="M2 2h28v29H2z" fill="#fff" stroke="#444" />
        <path d="M2 20h28v11H2z" fill="#b0b0b0" />
        <path d="M6.7 2v29M11.3 2v29M16 2v29M20.7 2v29M25.3 2v29M2 7h28M2 11.5h28M2 16.5h28M2 21h28M2 26h28" />
      </g>
    ),
  },
  {
    name: "Viewports",
    menu: "gap-1",
    icon: (
      <g fill="#86b4ec" stroke="#2f4f78" strokeWidth="1.5">
        <path d="M1.5 3.5h13v11.5h-13zM17.5 3.5h13v11.5h-13zM1.5 17.5h13v11.5h-13zM17.5 17.5h13v11.5h-13z" />
      </g>
    ),
  },
];

function NavigationBar() {
  return (
    <div className="absolute inset-x-0 bottom-3 flex justify-center">
      <div className="flex h-12 items-center gap-[17px] bg-[#f0f3f2] px-1">
        {NAV.map((item) => (
          <button key={item.name} aria-label={item.name} className={`flex items-center ${item.menu ?? ""}`}>
            <Icon size={32}>{item.icon}</Icon>
            {item.menu && <Caret />}
          </button>
        ))}
      </div>
    </div>
  );
}

/* ---------- timeline ---------- */

const PLAYBACK = [
  { name: "Go to start", d: "M5 4h3v24H5zM27 4v24L10 16z" },
  { name: "Step back", d: "M21 4v24L4 16zM24 11h3v10h-3z" },
  { name: "Play", d: "M5 1v30L28 16z" },
  { name: "Step forward", d: "M11 4v24l17-12zM4 11h3v10H4z" },
  { name: "Go to end", d: "M24 4h3v24h-3zM5 4v24l17-12z" },
];

const TEETH = Array.from({ length: 8 }, (_, i) => i * 45);

function Timeline() {
  return (
    <footer className="flex h-[100px] shrink-0 border-t-4 border-[#cbcbcb] bg-[#f0f3f2]">
      <div className="flex border-t-2 border-[#cbcbcb] pt-3 pr-4 pl-2">
        {PLAYBACK.map((button) => (
          <button key={button.name} aria-label={button.name} className="flex w-[50px] items-center justify-center">
            <svg width="32" height="32" viewBox="0 0 32 32" fill="#666">
              <path d={button.d} />
            </svg>
          </button>
        ))}
      </div>
      <div className="min-w-0 flex-1 overflow-hidden border-t-2 border-[#dfe0e0]">
        <div className="ml-[252px] h-3.5 w-[516px] rounded-lg bg-[#cbcbcb]" />
        <ol className="mt-2 flex px-2.5">
          {TIMELINE.map((name, i) => (
            <li key={i} className="relative flex w-12 shrink-0 flex-col items-center">
              <button aria-label={name} className={timelineButtonClass(name, i)}>
                <Icon size={32}>{TIMELINE_ICONS[name]}</Icon>
              </button>
              <span className="h-2 w-1 bg-[#cbcbcb]" />
              {i === CURRENT && (
                <svg width="24" height="64" viewBox="0 0 24 64" className="absolute -top-1 -right-3 z-10">
                  <path d="M0 0h24v7l-9 10v47h-5V17L0 7z" fill="#666" />
                </svg>
              )}
            </li>
          ))}
        </ol>
        <div className="flex h-1 gap-1">
          <span className="w-1.5 bg-[#cbcbcb]" />
          <span className="w-2 bg-[#cbcbcb]" />
          <span className="flex-1 bg-[#cbcbcb]" />
          <span className="w-2 bg-[#cbcbcb]" />
          <span className="w-1.5 bg-[#cbcbcb]" />
        </div>
      </div>
      <div className="flex w-[90px] items-center justify-center border-t-2 border-[#cbcbcb] pt-3 pl-1">
        <button aria-label="Timeline settings">
          <svg width="32" height="32" viewBox="-16 -16 32 32">
            {TEETH.map((angle) => (
              <path key={angle} d="M-3 -15.5h6l1 7h-8z" fill="#777" transform={`rotate(${angle})`} />
            ))}
            <circle r="7.8" fill="none" stroke="#777" strokeWidth="6.5" />
          </svg>
        </button>
      </div>
    </footer>
  );
}

export default function App() {
  return (
    <div className="flex h-screen overflow-hidden bg-white px-28 pt-[76px] pb-[148px]">
      <div className="flex min-w-0 flex-1 flex-col rounded-[20px] shadow-[0_0_0_1px_rgba(0,0,0,0.25),0_0_6px_rgba(0,0,0,0.2),0_36px_90px_rgba(0,0,0,0.45)]">
        <div className="flex min-h-0 flex-1 flex-col overflow-hidden rounded-[20px] bg-white">
          <TitleBar />
          <TabStrip />
          <Ribbon />
          <main className="relative min-h-0 flex-1">
            <Scene />
            <ViewCube />
            <NavigationBar />
            <p className="absolute right-9 bottom-2.5 font-['Noto_Sans',sans-serif] text-[23px] font-semibold text-[#333]">
              Loft1
            </p>
          </main>
          <Timeline />
        </div>
      </div>
    </div>
  );
}
